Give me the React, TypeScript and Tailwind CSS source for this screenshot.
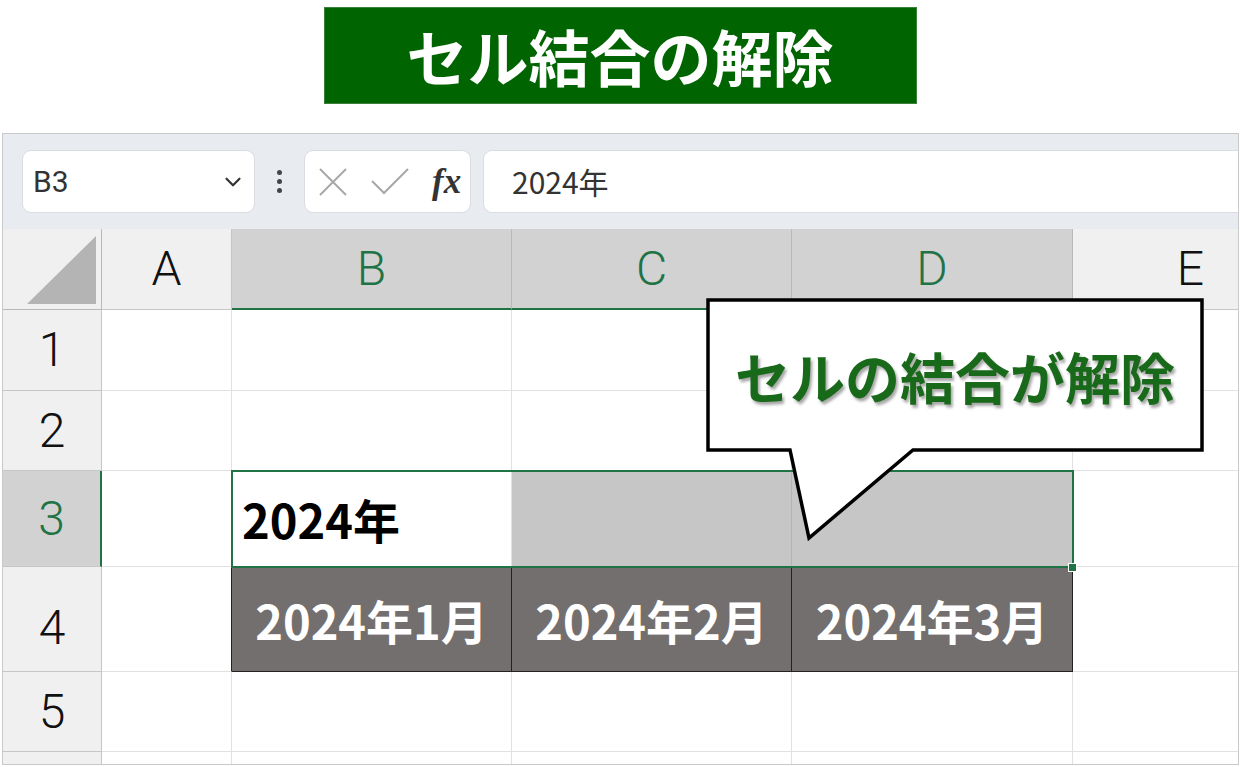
import { ChevronDown } from "lucide-react";

const cols = ["A", "B", "C", "D", "E"];
const months = ["2024年1月", "2024年2月", "2024年3月"];

function RowHead({ n, active = false, low = false }: { n: string; active?: boolean; low?: boolean }) {
  return (
    <div
      className={
        (active
          ? "flex items-center justify-center border-b border-r-2 border-b-[#c6c6c6] border-r-[#217346] bg-[#d2d2d2] font-['Roboto',sans-serif] text-[48px] font-light text-[#217346]"
          : "flex items-center justify-center border-b border-r border-[#c6c6c6] bg-[#f0f0f0] font-['Roboto',sans-serif] text-[48px] font-light text-[#111]") +
        (low ? " pt-[18px]" : "")
      }
    >
      {n}
    </div>
  );
}

function Cell({ className = "" }: { className?: string }) {
  return <div className={"border-b border-r border-[#e1e1e1] " + className} />;
}

export default function App() {
  return (
    <div className="relative h-[767px] w-[1240px] overflow-hidden bg-white font-['Noto_Sans_CJK_JP',sans-serif]">
      {/* Title */}
      <div className="flex justify-center pt-[7px]">
        <div className="flex h-[97px] w-[593px] items-center justify-center border border-[#3a7f3a] bg-[#006400] text-[61px] font-bold leading-none text-white">
          セル結合の解除
        </div>
      </div>

      {/* Excel window */}
      <div className="ml-[2px] mt-[29px] w-[1237px] border border-[#c9c9c9]">
        {/* Formula bar */}
        <div className="flex h-[95px] items-center bg-[#e8ebef] pl-[19px]">
          <div className="flex h-[63px] w-[233px] items-center justify-between rounded-[9px] border border-[#d9dce0] bg-white pl-[10px] pr-[8px]">
            <span className="font-['Roboto',sans-serif] text-[30px] text-[#333]">B3</span>
            <ChevronDown size={26} strokeWidth={2} className="text-[#333]" />
          </div>
          <div className="ml-[21px] flex w-[6px] flex-col items-center gap-[4px]">
            <span className="h-[5px] w-[5px] rounded-full bg-[#444]" />
            <span className="h-[5px] w-[5px] rounded-full bg-[#444]" />
            <span className="h-[5px] w-[5px] rounded-full bg-[#444]" />
          </div>
          <div className="ml-[22px] flex h-[63px] w-[167px] items-center rounded-[9px] border border-[#d9dce0] bg-white pl-[13px]">
            <svg width="30" height="30" viewBox="0 0 30 30" className="shrink-0">
              <path d="M2 2 L28 28 M28 2 L2 28" stroke="#a8a8a8" strokeWidth="2" fill="none" />
            </svg>
            <svg width="40" height="30" viewBox="0 0 40 30" className="ml-[22px] shrink-0">
              <path d="M2 14 L14 26 L38 2" stroke="#a8a8a8" strokeWidth="2" fill="none" />
            </svg>
            <span className="ml-[22px] font-['Liberation_Serif',serif] text-[35px] font-bold italic leading-none text-[#333]">
              fx
            </span>
          </div>
          <div className="ml-[12px] flex h-[63px] flex-1 items-center rounded-l-[9px] border border-r-0 border-[#d9dce0] bg-white pl-[28px]">
            <span className="text-[30px] text-[#333]">2024年</span>
          </div>
        </div>

        {/* Sheet grid */}
        <div className="grid grid-cols-[99px_130px_280px_280px_281px_1fr] grid-rows-[81px_81px_80px_96px_105px_80px_12px]">
          {/* header row */}
          <div className="relative border-b border-r border-[#b9b9b9] bg-[#f0f0f0]">
            <div className="absolute bottom-[5px] right-[5px] h-[68px] w-[69px] bg-[#b4b4b4] [clip-path:polygon(100%_0,100%_100%,0_100%)]" />
          </div>
          {cols.map((c) => {
            const sel = c === "B" || c === "C" || c === "D";
            if (c === "E")
              return (
                <div
                  key={c}
                  className="flex items-center justify-end border-b border-[#c6c6c6] bg-[#f0f0f0] pr-[34px] font-['Roboto',sans-serif] text-[48px] font-light text-[#111]"
                >
                  {c}
                </div>
              );
            return (
              <div
                key={c}
                className={
                  sel
                    ? "flex items-center justify-center border-b-2 border-r border-b-[#217346] border-r-[#b9b9b9] bg-[#d2d2d2] font-['Roboto',sans-serif] text-[48px] font-light text-[#217346]"
                    : "flex items-center justify-center border-b border-r border-[#c6c6c6] bg-[#f0f0f0] font-['Roboto',sans-serif] text-[48px] font-light text-[#111]"
                }
              >
                {c}
              </div>
            );
          })}

          {/* row 1 */}
          <RowHead n="1" />
          <Cell />
          <Cell />
          <Cell />
          <Cell />
          <Cell className="border-r-0" />

          {/* row 2 */}
          <RowHead n="2" />
          <Cell />
          <Cell />
          <Cell />
          <Cell />
          <Cell className="border-r-0" />

          {/* row 3 */}
          <RowHead n="3" active />
          <Cell />
          <div className="flex items-center border-b border-r border-[#e1e1e1] bg-white pl-[10px] text-[47px] font-bold leading-none text-black">
            2024年
          </div>
          <div className="border-b border-r border-[#b4b4b4] bg-[#c6c6c6]" />
          <div className="border-b border-r border-[#b4b4b4] bg-[#c6c6c6]" />
          <Cell className="border-r-0" />

          {/* row 4 */}
          <RowHead n="4" low />
          <div className="border-b border-r border-b-[#e1e1e1] border-r-[#222]" />
          {months.map((m) => (
            <div
              key={m}
              className="flex items-center justify-center border-b border-r border-[#222] bg-[#736f6e] text-[47px] font-bold leading-none text-white"
            >
              {m}
            </div>
          ))}
          <Cell className="border-r-0" />

          {/* row 5 */}
          <RowHead n="5" />
          <div className="border-b border-r border-[#e1e1e1]" />
          <Cell />
          <Cell />
          <Cell />
          <Cell className="border-r-0" />

          {/* partial row 6 */}
          <div className="border-r border-[#c6c6c6] bg-[#f0f0f0]" />
          <div className="border-r border-[#e1e1e1]" />
          <div className="border-r border-[#e1e1e1]" />
          <div className="border-r border-[#e1e1e1]" />
          <div className="border-r border-[#e1e1e1]" />
          <div />
        </div>
      </div>

      {/* selection B3:D3 */}
      <div className="pointer-events-none absolute left-[231px] top-[470px] h-[98px] w-[843px] border-2 border-[#217346]" />
      <div className="absolute left-[1068px] top-[563px] h-[9px] w-[9px] border border-white bg-[#217346]" />

      {/* callout */}
      <div className="absolute left-[705px] top-[297px] h-[245px] w-[500px]">
        <svg width="500" height="245" viewBox="0 0 500 245" className="absolute inset-0">
          <path
            d="M3 3 H497 V153 H208 L104 241 L85 153 H3 Z"
            fill="#fff"
            stroke="#000"
            strokeWidth="3.5"
            strokeLinejoin="miter"
          />
        </svg>
        <div className="relative flex h-[156px] items-center justify-center text-[55px] font-bold leading-none text-[#19691a] [text-shadow:2px_3px_3px_rgba(0,0,0,0.35)]">
          セルの結合が解除
        </div>
      </div>
    </div>
  );
}
